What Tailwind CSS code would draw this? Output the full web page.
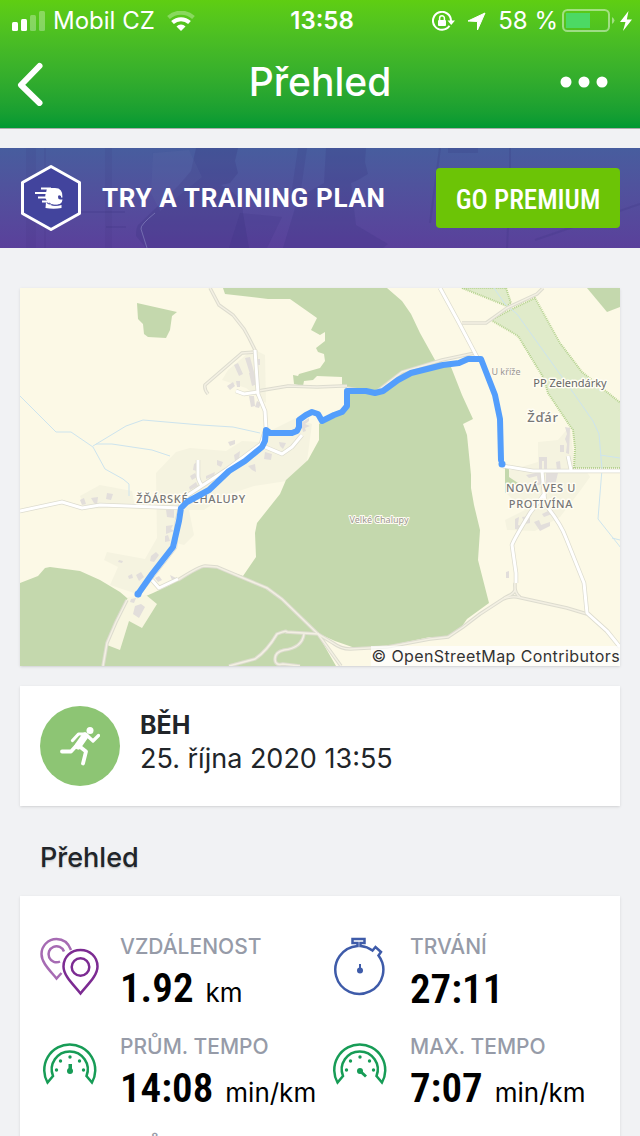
<!DOCTYPE html>
<html lang="cs">
<head>
  <meta charset="UTF-8">
  <meta name="viewport" content="width=device-width, initial-scale=1">
  <title>Přehled</title>
  <script src="https://cdn.jsdelivr.net/npm/@tailwindcss/browser@4"></script>
</head>
<body class="bg-[#f1f2f4] h-screen overflow-hidden font-[Inter,sans-serif] text-[#212529]">

  <header class="h-[129px] bg-linear-to-b from-[#5fce12] to-[#009933] border-b border-[#a9adab] text-white">
    <div class="grid grid-cols-[1fr_auto_1fr] items-center h-[42px] pl-3 pr-2 text-2xl">
      <div class="flex items-center gap-2">
        <svg class="w-[33px] h-5" viewBox="0 0 33 20" fill="#fff">
          <rect x="0" y="11" width="6" height="9" rx="1.5"/>
          <rect x="9" y="8" width="6" height="12" rx="1.5"/>
          <rect x="18" y="4" width="6" height="16" rx="1.5" opacity=".3"/>
          <rect x="27" y="0" width="6" height="20" rx="1.5" opacity=".3"/>
        </svg>
        <span>Mobil CZ</span>
        <svg class="w-7 h-5 ml-1" viewBox="0 0 28 20" fill="none" stroke="#fff">
          <path d="M1.500 6.500a18.500 18.500 0 0 1 25 0" stroke-width="4" opacity=".3"/>
          <path d="M5.500 11.500a12.500 12.500 0 0 1 17 0" stroke-width="4"/>
          <path d="M14 20l-4.500-4.500a6.300 6.300 0 0 1 9 0z" fill="#fff" stroke="none"/>
        </svg>
      </div>
      <span class="font-semibold">13:58</span>
      <div class="flex items-center justify-end gap-1">
        <svg class="w-[23px] h-5 mr-2" viewBox="0 0 23 20" fill="none" stroke="#fff" stroke-width="2">
          <path d="M17.500 14.800A9 9 0 1 1 19 10"/>
          <path d="M15.500 9.500h7.500l-3.800 4.500z" fill="#fff" stroke="none"/>
          <rect x="6" y="9" width="8" height="6" rx="1" fill="#fff" stroke="none"/>
          <path d="M7.600 9V7.200a2.400 2.400 0 0 1 4.800 0V9" stroke-width="1.500"/>
        </svg>
        <svg class="w-[19px] h-[19px] mr-2" viewBox="0 0 19 19" fill="#fff" stroke="#fff" stroke-linejoin="round"><path d="M18 1L10.500 18V9.500L1 9z"/></svg>
        <span>58 %</span>
        <div class="flex items-center gap-1">
          <svg class="w-[54px] h-6" viewBox="0 0 54 24" fill="none">
            <rect x="1" y="1" width="46" height="21" rx="4.500" stroke="#fff" stroke-width="2" opacity=".45"/>
            <rect x="4" y="4" width="24" height="15" fill="#4cd964"/>
            <path d="M50 8q5 3.500 0 7z" fill="#fff" opacity=".45"/>
          </svg>
          <svg class="w-3 h-5" viewBox="0 0 12 20" fill="#fff"><path d="M8.500 0L0 11h5.500L3 20 12 8.500H6.800z"/></svg>
        </div>
      </div>
    </div>
    <div class="grid grid-cols-[1fr_auto_1fr] items-center h-[84px] px-4">
      <button aria-label="Zpět" class="w-8 h-11">
        <svg class="w-7 h-11" viewBox="0 0 28 44" fill="none" stroke="#fff" stroke-width="6" stroke-linecap="round" stroke-linejoin="round"><path d="M23.500 4L5 23l18.500 18"/></svg>
      </button>
      <h1 class="text-[39px] leading-[48px] font-medium pb-1">Přehled</h1>
      <button aria-label="Další" class="justify-self-end w-12 h-8 mr-4 mb-1">
        <svg class="w-12 h-3" viewBox="0 0 48 12" fill="#fff"><circle cx="6" cy="6" r="5.500"/><circle cx="24" cy="6" r="5.500"/><circle cx="42" cy="6" r="5.500"/></svg>
      </button>
    </div>
  </header>

  <main>
    <section class="relative mt-[19px] h-[100px] px-5 flex items-center bg-linear-to-b from-[#475d9e] to-[#5a409b]">
      <!-- faint runners behind the banner -->
      <svg class="absolute inset-0 w-full h-full" viewBox="0 0 640 100" preserveAspectRatio="xMidYMid slice" fill="#342b78">
        <path d="M26 0h10v100H26zM105 0h7v100h-7zM44 0h2v100h-2z" opacity=".08"/>
        <path d="M196 0h42l-3 13 3 12-8 10-9 2q22 10 22 28l6 35H146l-10-12q0-10 3-12l20-19 20-20 12-14z" opacity=".2"/>
        <path d="M153 5l36-3 13 27-42 34-9-18z" fill="#6370ac" opacity=".15"/>
        <path d="M326 0h40l-1 14 3 12-10 6-7 3 5 42 32 19-5 4H283l15-50 26-15z" opacity=".18"/>
        <path d="M240 65l42 4-15 31h-38zM298 0h9l-8 55h-9zM448 0h30v5h-30z" opacity=".14"/>
        <path d="M80 64h45M106 79h20M510 0v40l-3 60M440 0l-10 75M535 92l105-36M480 30q30-25 50 40" fill="none" stroke="#342b78" stroke-width="2" opacity=".16"/>
        <path d="M155 65q-15 12-14 16l6 19" fill="none" stroke="#8b8bc3" stroke-width="1" opacity=".6"/>
      </svg>
      <svg class="relative w-[62px] h-[68px] shrink-0" viewBox="0 0 62 68">
        <path d="M31 2.500L59.500 18.500v31L31 65.500 2.500 49.500v-31z" fill="#42449d" stroke="#fff" stroke-width="3" stroke-linejoin="round"/>
        <path d="M27 24h8q8 0 7.500 9.500H41V32q-3-2-3 1t3 2.500h1.500Q42 40 37 41h-7l-3-4q-3-4-1-8z" fill="#fff"/>
        <path d="M21 24.500h10M15 29h12M20 29h8M18 33.500h9M22 37.500h9" stroke="#fff" stroke-width="2"/>
        <path d="M26 38q4 5.500 15.500 3v3q-8 1.500-16 0z" fill="#fff"/>
        <path d="M29 39q4 3.500 12 1.500" fill="none" stroke="#42449d" stroke-width="1"/>
      </svg>
      <p class="relative ml-5 text-[26px] leading-8 font-bold text-white font-[Roboto,sans-serif] tracking-wide whitespace-nowrap">TRY A TRAINING PLAN</p>
      <button class="relative ml-auto h-[60px] w-46 pt-1 rounded bg-[#6cc406] text-white text-[27px] leading-8 font-medium font-['Roboto_Condensed','Liberation_Sans_Narrow',sans-serif] whitespace-nowrap">GO PREMIUM</button>
    </section>

    <section class="relative mx-5 mt-10 shadow-sm bg-[#fcf9e6]">
      <svg class="block w-full" viewBox="20 288 600 378" role="img" aria-label="Mapa trasy">
        <!-- residential areas -->
        <g fill="#f5f3e0">
          <path d="M228 370l25-21 12 6 1 48-20-15-24-8z"/>
          <path d="M190 448l36 3 16-10 18 1 8-10 28-14 16 6-5 37-20 20-33 5-30 10-20 14h-15l5 25-10 10-8-2-10 20-16 12-16 18-24-8 8-18-14-7 3-8 38 7 12-21-1-65 20-21z"/>
          <path d="M80 496l20-11 32 6 3 16-50 2z"/>
          <path d="M505 472l33-10v-20l20-2 12-14 5 43h10l5 8-10 14-20 26-25 14-28-1-2-10 20-10-18-16z"/>
        </g>
        <!-- woods -->
        <g fill="#c4d8ad">
          <path d="M223 288L225 294 268 299 290 299 317 318 311 330 320 335 325 332 325 341 316 348 318 352 324 354 325 361 320 368 299 374 298 376 293 375 294 384 303 386 304 381 313 380 317 376 342 377 342 386 347 388 347 407 322 421 319 424 319 440 308 460 297 470 286 480 283 487 280 494 257 523 255 533 256 557 243 576 210 565 200 566 170 585 153 593 146 596 127 598 120 592 100 580 80 571 50 567 45 568 38 576 20 583V666H336L317 633 335 641 355 648 392 645 430 637 447 637 458 632 467 619 489 603 478 560 480 530 474 505 471 488 471 475 467 435 463 424 473 419 462 395 451 367 435 360 420 333 411 314 402 301 387 288z"/>
          <path d="M137 303l40 9-5 4-2 14-4 8-18-1-4-3-1-10-5-5z"/>
          <path d="M587 288l20 24 13-5v-19z"/>
          <path d="M505 468h4v9l9 6-13 10z"/>
        </g>
        <path d="M128 597L107 645 120 650 129 621 142 628 157 604 146 595z" fill="#f8f6e1"/>
        <!-- nature reserve -->
        <g fill="#e0ebca" stroke="#b4d28f" stroke-width="2" stroke-dasharray="1 1">
          <path d="M462 288l45 18 4-3-5-15z"/>
          <path d="M491 320l27 16 25 41 5 16 22 33 3 4 2 18-1 20h48v-64l-40-32-22-29-25-45-21 10z"/>
        </g>
        <!-- streams -->
        <g fill="none" stroke="#cde4ee" stroke-width="1">
          <path d="M20 396l36 36h15l22 15 12 22 18 10 6 5v12M93 446l33-20 17-6 58 5 32 2 27 6M96 444h16l40 6 18 6"/>
          <path d="M494 288l11 16 12 10 60 84 16 23 6 13 3 35-4 50 23 29M600 455l20 3M612 538l8 2"/>
        </g>
        <!-- tracks -->
        <g fill="none">
          <g stroke="#dddccf" stroke-width="3.500">
            <path d="M210 288l9 17 14 10 11 14 5 9 7 14M256 352l-14 1-37 32q-1 4 3 9M258 391l30-5 29 1 25-1h5M347 388l28 5 27-21 40-12 33-7M462 323h24l21-15 30-14 6-6"/>
            <path d="M178 580q22-14 27-14l12 1 50 21 15 11 36 35 15 9q8 6 17 6L387 647 430 639 448 637 463 627 480 614 503 599q8-3 14-2L567 608 587 614M127 600l-11 22-9 21-4 23"/>
            <path d="M229 666l26-7q12-8 22-25 10-4 10-2l32 2M304 634q-2 14-20 16-9 2-9 9t8 5l17 2M318 634l23 32M504 598q10-4 11-8v-7q-1 10 5 14"/>
          </g>
          <g stroke="#f3f0e3" stroke-width="1.500">
            <path d="M210 288l9 17 14 10 11 14 5 9 7 14M256 352l-14 1-37 32q-1 4 3 9M258 391l30-5 29 1 25-1h5M347 388l28 5 27-21 40-12 33-7M462 323h24l21-15 30-14 6-6"/>
            <path d="M178 580q22-14 27-14l12 1 50 21 15 11 36 35 15 9q8 6 17 6L387 647 430 639 448 637 463 627 480 614 503 599q8-3 14-2L567 608 587 614M127 600l-11 22-9 21-4 23"/>
            <path d="M229 666l26-7q12-8 22-25 10-4 10-2l32 2M304 634q-2 14-20 16-9 2-9 9t8 5l17 2M318 634l23 32M504 598q10-4 11-8v-7q-1 10 5 14"/>
          </g>
        </g>
        <!-- buildings -->
        <g fill="#e2dedb">
          <path d="M234 365l4-2 5 11-4 2zM245 358l5-1 4 15-4 2zM249 373l5-1 3 12-5 2zM256 359h4v6h-4zM227 386l6-4 2 4-5 4zM236 381h4v6h-3zM249 396h5l1 10-4 1zM257 401l4 2-2 5-4-1z"/>
          <path d="M301 423l8-5v3l-4 3 5 2-5 2 1 3-3 1zM228 442l7-2v4l-5 2zM217 460l6 2-2 5-4-2zM194 464l5-3 1 5-3 5-4-1zM234 455l6-4-1 9-4 1zM265 452l7 2-1 6-7-1zM279 442l7 1-3 6-3-3zM248 466l7-2 1 8-4-2zM206 476l9-4-1 4-8 3zM190 476l5-3 2 4-5 3zM189 487l7-5 2 4-8 4z"/>
          <path d="M80 500l4-2 2 6-4 1zM91 498l7-1-1 8-3-2zM107 493l6 1-2 6-5-1zM166 510h8v8l-7-1zM166 526l7-1-2 4 3 2-8 3zM165 536l3-1 2 6-5 1zM151 556l5-4 3 3-5 7-4-1zM136 575l5-3 3 5-5 4zM128 576l4-2 1 4-4 1zM155 578l4-2 3 4-4 2zM170 575l6 3-4 2z"/>
          <path d="M135 606l6-2 4 3-6 11-6-4zM131 599l5-1-2 5-4-1zM119 560l4 1-1 2-4-1z"/>
          <path d="M565 427l5 1-1 26-3-1 1-9-2-5 2-5zM560 445h4v7h-4zM539 457h8v13h-3v-9h-2v8h-3zM556 462l4-1 1 10-4-1zM526 475l14-3 2 12-13 4 1-4 8-2-1-6-8 2zM546 473h12l-3 12-9 1zM515 519l4-2-1 8 4 1-1 4-6-1zM522 517l8-1v7l-5 1zM534 522l5-2 2 5 9-3v4l-10 5zM542 514l8-4 2 4-8 3zM506 572l3-1v7h-3z"/>
        </g>
        <!-- roads -->
        <g fill="none" stroke-linejoin="round" stroke-linecap="butt">
          <g stroke="#dddccf" stroke-width="4.500">
            <path d="M255 350l3 44 7 17 1 17-5 16-35 26-44 29-5 22-2 26-39 50M20 511l42-9 20 6 18-3 82 3M236 391l8 3 14-2M263 446l19 8 10-7 10-12M202 486q-4-6-4-10v-16M152 580l7 8 19-9M440 288l18 33 19 36M503 466l30 5h87M571 470l-3-14M542 471l3 33q16 20 21 34l18 45 3 30 20 18 13 16M545 493l-15 20q-16 26-18 32l4 28v10"/>
          </g>
          <g stroke="#fff" stroke-width="3">
            <path d="M255 350l3 44 7 17 1 17-5 16-35 26-44 29-5 22-2 26-39 50M20 511l42-9 20 6 18-3 82 3M236 391l8 3 14-2M263 446l19 8 10-7 10-12M202 486q-4-6-4-10v-16M152 580l7 8 19-9M440 288l18 33 19 36M503 466l30 5h87M571 470l-3-14M542 471l3 33q16 20 21 34l18 45 3 30 20 18 13 16M545 493l-15 20q-16 26-18 32l4 28v10"/>
          </g>
        </g>
        <!-- place names -->
        <g class="font-['Noto_Sans',sans-serif]" fill="#777" stroke="#fffdf3" stroke-width="3" stroke-linejoin="round" paint-order="stroke" text-anchor="middle">
          <g font-size="11" font-weight="500" letter-spacing=".06em">
            <text x="191" y="503">ŽĎÁRSKÉ CHALUPY</text>
            <text x="541" y="492">NOVÁ VES U</text>
            <text x="541" y="508">PROTIVÍNA</text>
          </g>
          <text x="543" y="422" font-size="13" font-weight="500" letter-spacing=".06em">Žďár</text>
          <text x="570" y="387" font-size="11" fill="#666">PP Zelendárky</text>
          <g font-size="9" fill="#9a958f" stroke-width="1">
            <text x="506" y="375">U kříže</text>
            <text x="379" y="523" stroke-width="2">Velké Chalupy</text>
          </g>
        </g>
        <!-- recorded route -->
        <path d="M138 594L152 574 173 547 179 521 181 508 187 502 209 490 229 471 245 461 262 447 265 441 266 430 270 433 292 433 297 431 299 427 299 420 306 415 312 412 318 414 322 421 334 415 342 412 347 406 347 391 366 391 375 393 383 391 398 380 411 373 443 365 459 363 468 359 481 359 495 395 500 419 501 460" fill="none" stroke="#539efc" stroke-width="6" stroke-linejoin="round" stroke-linecap="round"/>
        <circle cx="138" cy="594" r="3.500" fill="#539efc"/>
        <circle cx="502" cy="464" r="3.500" fill="#539efc"/>
      </svg>
      <a href="#" class="absolute right-0 bottom-0 bg-white/70 text-base leading-5 text-[#333] tracking-wide whitespace-nowrap">© OpenStreetMap Contributors</a>
    </section>

    <section class="mx-5 mt-5 h-[120px] px-5 flex items-center gap-5 bg-white shadow-sm">
      <div class="w-20 h-20 rounded-full bg-[#8dc574] flex items-center justify-center">
        <svg class="w-10 h-10" viewBox="0 0 40 40" fill="none" stroke="#fff" stroke-linecap="round" stroke-linejoin="round">
          <circle cx="30" cy="4.500" r="3.500" fill="#fff" stroke="none"/>
          <path d="M12.500 14.500l6-6.500h7l7.500 7 5.500-5.500" stroke-width="3.200"/>
          <path d="M25 10l-7 10" stroke-width="7"/>
          <path d="M17 19l-6 6.500H2M19 20l7 5.500-3 12" stroke-width="3.800"/>
        </svg>
      </div>
      <div class="pb-1.5">
        <h2 class="text-[25px] leading-8 font-bold">BĚH</h2>
        <p class="text-[27px] leading-9">25. října 2020 13:55</p>
      </div>
    </section>

    <h2 class="ml-10 mt-[33px] mb-[19px] text-[27px] leading-[38px] font-medium text-shadow-sm">Přehled</h2>

    <section class="mx-5 pl-5 pt-9 bg-white shadow-sm">
      <dl class="grid grid-cols-[290px_1fr] gap-y-4">
        <div class="grid grid-cols-[80px_1fr] h-[84px]">
          <svg class="row-span-2 w-15 h-15 mt-1" viewBox="0 0 60 60" fill="none" stroke-width="2.500">
            <g stroke="#a66bb3">
              <path d="M31 14C28 6 22 3 16.500 3 8 3 1.500 10 1.500 18c0 9 9 17 15 24.500l5-5.500"/>
              <path d="M24 15.500a8 8 0 1 0-4 10"/>
            </g>
            <g stroke="#7c2b92">
              <path d="M40.500 57.500C34 49 23.500 40 23.500 30.500 23.500 21 31 14 40.500 14s17 7 17 16.500c0 9.500-10.500 18.500-17 27z"/>
              <circle cx="40.500" cy="31" r="8.800"/>
            </g>
          </svg>
          <dt class="text-[21px] leading-[30px] font-medium text-[#969ba8] whitespace-nowrap">VZDÁLENOST</dt>
          <dd class="flex items-baseline gap-3 leading-[52px] text-black whitespace-nowrap"><span class="text-[41px] font-semibold font-['Roboto_Condensed','Liberation_Sans_Narrow',sans-serif]">1.92</span><span class="text-[26px]">km</span></dd>
        </div>

        <div class="grid grid-cols-[80px_1fr] h-[84px]">
          <svg class="row-span-2 w-15 h-15 mt-1" viewBox="-3 0 60 60" fill="none" stroke="#3e5ba9" stroke-width="2.500">
            <path d="M24.500 10V7h-5V3h12v4h-4v3a24 24 0 0 1 12 4.500l3-3.500 5.500 5-2.500 3.500A24 24 0 1 1 24.500 10z"/>
            <path d="M27 28v7" stroke-width="2"/>
            <circle cx="27" cy="34.500" r="3" fill="#3e5ba9" stroke="none"/>
          </svg>
          <dt class="text-[21px] leading-[30px] font-medium text-[#969ba8] whitespace-nowrap">TRVÁNÍ</dt>
          <dd class="flex items-baseline gap-3 leading-[52px] text-black whitespace-nowrap"><span class="text-[41px] font-semibold font-['Roboto_Condensed','Liberation_Sans_Narrow',sans-serif]">27:11</span></dd>
        </div>

        <div class="grid grid-cols-[80px_1fr] h-[84px]">
          <svg class="row-span-2 w-15 h-15 mt-1" viewBox="0 0 60 60" fill="none" stroke="#179c56" stroke-width="2.500">
            <path d="M7.500 46.500A25.500 25.500 0 1 1 52 46.500l-5.500-6.500a18 18 0 1 0-33.500 0z"/>
            <g fill="#179c56" stroke="none">
              <circle cx="16.500" cy="34" r="1.700"/><circle cx="20.500" cy="25" r="1.700"/><circle cx="30" cy="21" r="1.700"/><circle cx="39.500" cy="25" r="1.700"/><circle cx="43.500" cy="34" r="1.700"/>
              <circle cx="30" cy="35" r="3"/>
              <path d="M28.500 28H32v7h-3.500z"/>
            </g>
          </svg>
          <dt class="text-[21px] leading-[30px] font-medium text-[#969ba8] whitespace-nowrap">PRŮM. TEMPO</dt>
          <dd class="flex items-baseline gap-3 leading-[52px] text-black whitespace-nowrap"><span class="text-[41px] font-semibold font-['Roboto_Condensed','Liberation_Sans_Narrow',sans-serif]">14:08</span><span class="text-[26px]">min/km</span></dd>
        </div>

        <div class="grid grid-cols-[80px_1fr] h-[84px]">
          <svg class="row-span-2 w-15 h-15 mt-1" viewBox="0 0 60 60" fill="none" stroke="#179c56" stroke-width="2.500">
            <path d="M7.500 46.500A25.500 25.500 0 1 1 52 46.500l-5.500-6.500a18 18 0 1 0-33.500 0z"/>
            <g fill="#179c56" stroke="none">
              <circle cx="16.500" cy="34" r="1.700"/><circle cx="20.500" cy="25" r="1.700"/><circle cx="30" cy="21" r="1.700"/><circle cx="39.500" cy="25" r="1.700"/><circle cx="43.500" cy="34" r="1.700"/>
              <circle cx="30" cy="35" r="3"/>
            </g>
            <path d="M30 35l6 5.500" stroke-width="3"/>
          </svg>
          <dt class="text-[21px] leading-[30px] font-medium text-[#969ba8] whitespace-nowrap">MAX. TEMPO</dt>
          <dd class="flex items-baseline gap-3 leading-[52px] text-black whitespace-nowrap"><span class="text-[41px] font-semibold font-['Roboto_Condensed','Liberation_Sans_Narrow',sans-serif]">7:07</span><span class="text-[26px]">min/km</span></dd>
        </div>

        <div class="grid grid-cols-[80px_1fr] h-[84px]">
          <dt class="col-start-2 text-[21px] leading-[30px] font-medium text-[#969ba8] whitespace-nowrap">PRŮM. RYCHLOST</dt>
        </div>
      </dl>
    </section>
  </main>

</body>
</html>
